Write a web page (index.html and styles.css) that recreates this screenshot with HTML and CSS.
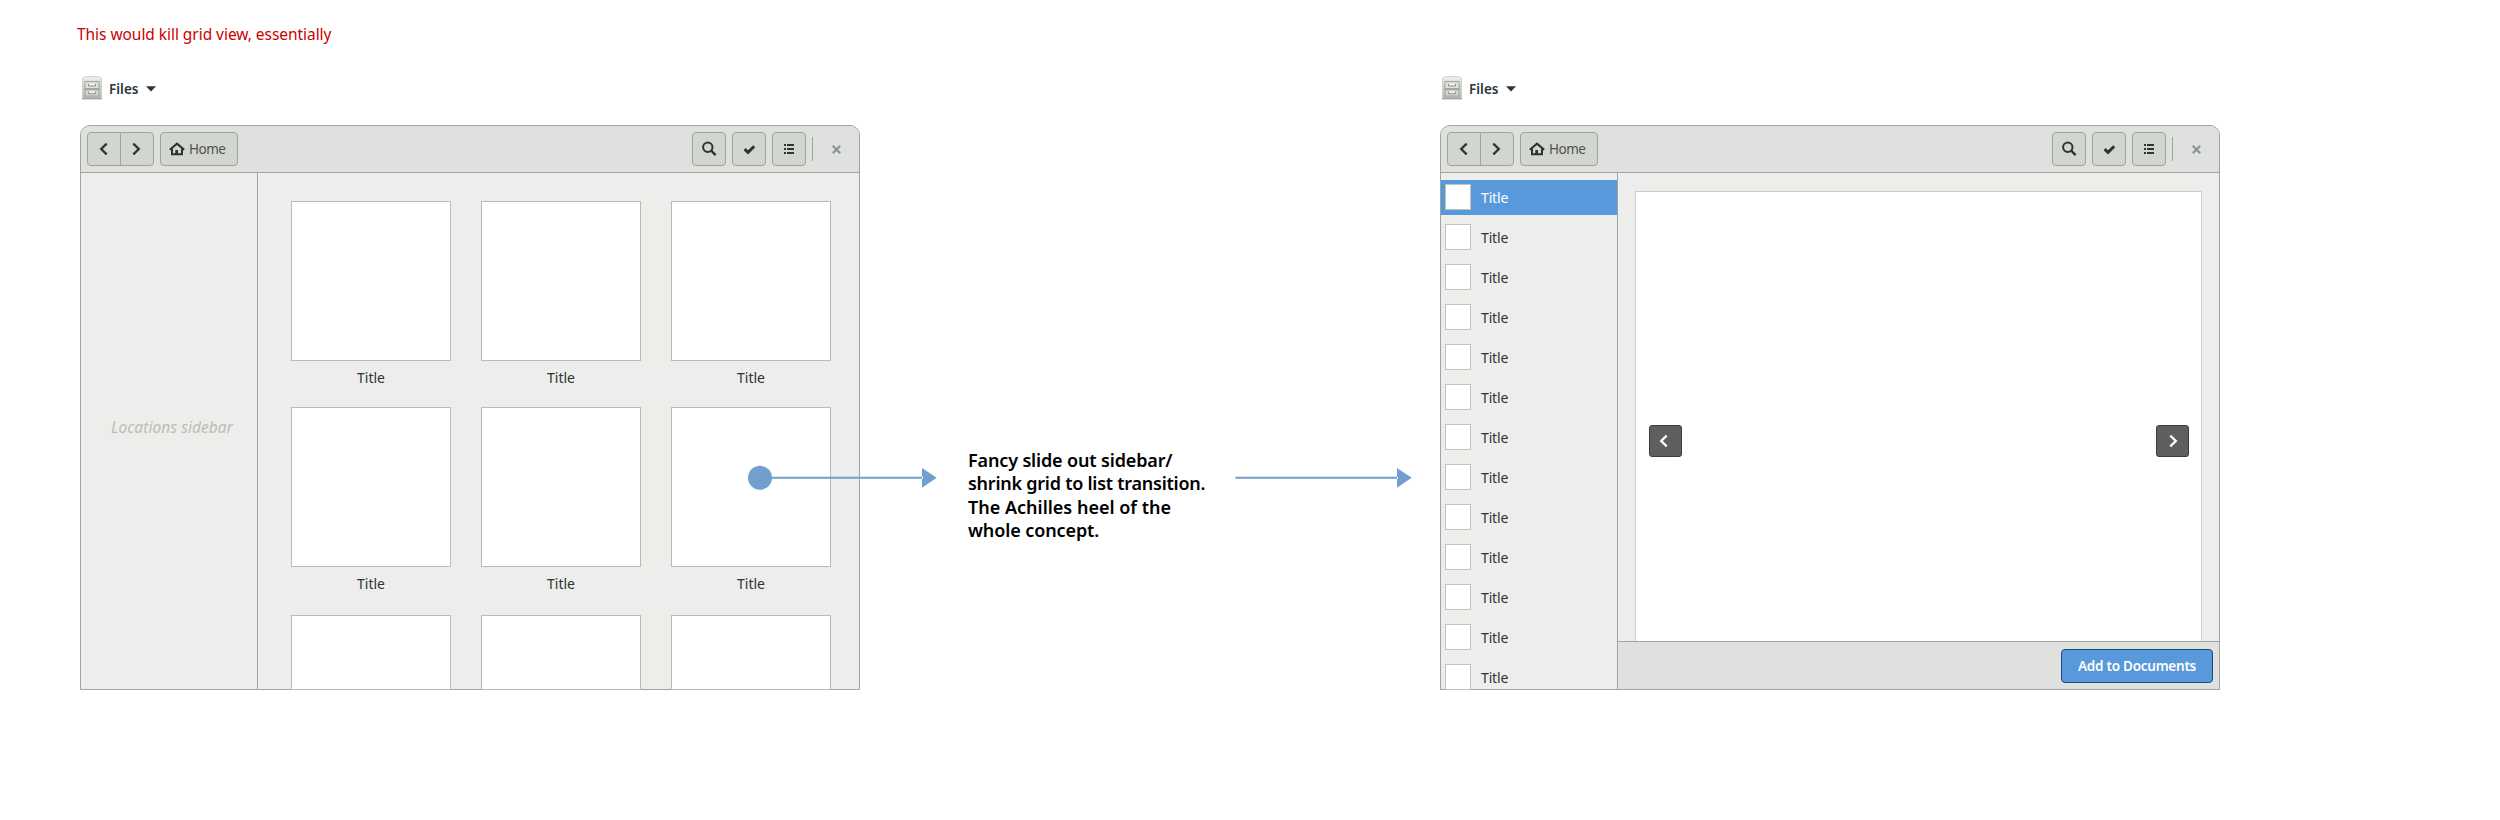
FILE: index.html
```
<!DOCTYPE html>
<html lang="en"><head><meta charset="utf-8"><title>Files</title><link rel="stylesheet" href="styles.css"></head>
<body>
<svg class="defs" width="0" height="0">
<defs>
<linearGradient id="metal" x1="0" y1="0" x2="0" y2="1"><stop offset="0" stop-color="#f4f4f2"/><stop offset=".3" stop-color="#d8dad6"/><stop offset="1" stop-color="#b8bab6"/></linearGradient>
<symbol id="cabinet" viewBox="0 0 20 24"><path d="M.5 22.500V4Q.5 .7 3.500 .7H16.500Q19.500 .7 19.500 4V22.500Z" fill="url(#metal)" stroke="#cdcfcb"/><path d="M0 22.800H20" stroke="#8c8e8a"/><rect x="3" y="5.500" width="14" height="7" fill="#dfe0dd" stroke="#a2a4a0"/><rect x="3" y="13.500" width="14" height="6.500" fill="#d2d4d0" stroke="#a2a4a0"/><path d="M6.500 7.800V10H13.500V7.800M6.500 15.500V17.700H13.500V15.500" fill="#f2f2f2" stroke="#8e908c"/></symbol>
<symbol id="prev" viewBox="0 0 16 16"><path d="M10.700 2.600 5.200 8 10.700 13.400" fill="none" stroke="currentColor" stroke-width="2.300"/></symbol>
<symbol id="next" viewBox="0 0 16 16"><path d="M5.300 2.600 10.800 8 5.300 13.400" fill="none" stroke="currentColor" stroke-width="2.300"/></symbol>
<symbol id="home" viewBox="0 0 16 14"><path d="M.8 7.800 8 1.700 15.200 7.800" fill="none" stroke="currentColor" stroke-width="2.100"/><path d="M3 6.500V12.200H13V6.500" fill="none" stroke="currentColor" stroke-width="2"/><path d="M6.300 13V8H9V13Z" fill="currentColor"/></symbol>
<symbol id="search" viewBox="0 0 16 16"><circle cx="6.800" cy="6.300" r="4.700" fill="none" stroke="currentColor" stroke-width="2"/><path d="M10.200 9.700 14.600 14.200" stroke="currentColor" stroke-width="2.400"/></symbol>
<symbol id="check" viewBox="0 0 16 16"><path d="M3.600 8.200 7 11.400 13.200 5.300" fill="none" stroke="currentColor" stroke-width="3"/></symbol>
<symbol id="list" viewBox="0 0 16 16"><path d="M3 4H5M6 4H13M3 8H5M6 8H13M3 12H5M6 12H13" stroke="currentColor" stroke-width="2"/></symbol>
<symbol id="close" viewBox="0 0 9 9"><path d="M.8 .8 8.200 8.200M8.200 .8 .8 8.200" stroke="currentColor" stroke-width="2.200"/></symbol>
</defs></svg>
<main class="board">
<p class="note">This would kill grid view, essentially</p>
<div class="flow">
<section class="screen">
<div class="appmenu"><svg class="cabinet"><use href="#cabinet"/></svg><b class="appname">Files</b><svg class="caret" viewBox="0 0 10 6"><path d="M0 .3H10L5 5.500Z"/></svg></div>
<div class="window">
<header class="bar"><div class="pair"><span><svg class="ic"><use href="#prev"/></svg></span><span><svg class="ic"><use href="#next"/></svg></span></div><div class="btn path"><svg class="house"><use href="#home"/></svg><span class="home">Home</span></div><div class="tools"><span class="btn"><svg class="ic"><use href="#search"/></svg></span><span class="btn"><svg class="ic"><use href="#check"/></svg></span><span class="btn"><svg class="ic"><use href="#list"/></svg></span></div><i class="sep"></i><svg class="close"><use href="#close"/></svg></header>
<div class="body">
<aside class="side places"><span class="hint">Locations sidebar</span></aside>
<div class="grid">
<figure><div class="thumb"></div><figcaption class="title">Title</figcaption></figure><figure><div class="thumb"></div><figcaption class="title">Title</figcaption></figure><figure><div class="thumb"></div><figcaption class="title">Title</figcaption></figure>
<figure><div class="thumb"></div><figcaption class="title">Title</figcaption></figure><figure><div class="thumb"></div><figcaption class="title">Title</figcaption></figure><figure><div class="thumb"></div><figcaption class="title">Title</figcaption></figure>
<figure><div class="thumb cut"></div></figure><figure><div class="thumb cut"></div></figure><figure><div class="thumb cut"></div></figure>
</div></div></div>
</section>
<div class="step">
<svg class="arrow first" viewBox="0 0 190 26"><circle cx="12" cy="12.800" r="12"/><path d="M12 11.800H175V13.800H12ZM174 3V22.700L188.700 12.800Z"/></svg>
<p class="callout"><span class="l1">Fancy slide out sidebar/</span><br><span class="l2">shrink grid to list transition.</span><br><span class="l3">The Achilles heel of the</span><br><span class="l4">whole concept.</span></p>
<svg class="arrow second" viewBox="0 0 177 26"><path d="M.3 11.800H163V13.800H.3ZM162 3V22.700L176.700 12.800Z"/></svg>
</div>
<section class="screen">
<div class="appmenu"><svg class="cabinet"><use href="#cabinet"/></svg><b class="appname">Files</b><svg class="caret" viewBox="0 0 10 6"><path d="M0 .3H10L5 5.500Z"/></svg></div>
<div class="window">
<header class="bar"><div class="pair"><span><svg class="ic"><use href="#prev"/></svg></span><span><svg class="ic"><use href="#next"/></svg></span></div><div class="btn path"><svg class="house"><use href="#home"/></svg><span class="home">Home</span></div><div class="tools"><span class="btn"><svg class="ic"><use href="#search"/></svg></span><span class="btn"><svg class="ic"><use href="#check"/></svg></span><span class="btn"><svg class="ic"><use href="#list"/></svg></span></div><i class="sep"></i><svg class="close"><use href="#close"/></svg></header>
<div class="body">
<ul class="side list">
<li class="sel"><i></i><span class="title">Title</span></li><li><i></i><span class="title">Title</span></li><li><i></i><span class="title">Title</span></li><li><i></i><span class="title">Title</span></li><li><i></i><span class="title">Title</span></li><li><i></i><span class="title">Title</span></li><li><i></i><span class="title">Title</span></li><li><i></i><span class="title">Title</span></li><li><i></i><span class="title">Title</span></li><li><i></i><span class="title">Title</span></li><li><i></i><span class="title">Title</span></li><li><i></i><span class="title">Title</span></li><li class="last"><i></i><span class="title">Title</span></li>
</ul>
<div class="viewer"><div class="stage"><div class="page"><span class="nav back"><svg class="ic"><use href="#prev"/></svg></span><span class="nav"><svg class="ic"><use href="#next"/></svg></span></div></div>
<footer class="actions"><span class="add"><span class="addtext">Add to Documents</span></span></footer></div>
</div></div>
</section>
</div>
</main>
</body></html>
```
FILE: styles.css
```
* { box-sizing: border-box; }
html { overflow: hidden; }
body { margin: 0; background: #fff; color: #2e3436; font: 14px/20px "Noto Sans", "Open Sans", sans-serif; }
p, ul, figure { margin: 0; padding: 0; }
svg { display: block; flex: none; }
.defs { position: absolute; }
.board { width: 2500px; height: 820px; padding-top: 24px; overflow: hidden; }
.note { height: 22px; padding-left: 77px; color: #c00; font-size: 15.500px; line-height: 20px; letter-spacing: -.050px; white-space: nowrap; }
.flow { display: flex; padding-left: 80px; margin-top: 29px; }
.screen { width: 780px; flex: none; }
.appmenu { display: flex; height: 50px; padding-left: 2px; }
.cabinet { width: 20px; height: 24px; margin-top: 1px; }
.appname { width: 30px; margin: 4px 0 0 7px; font-size: 13.500px; font-weight: 600; }
.caret { width: 10px; height: 6px; margin: 11px 0 0 7px; fill: #2e3436; }
.window { height: 565px; border: 1px solid #a0a4a0; border-radius: 10px 10px 0 0; background: #ededeb; }
.bar { display: flex; height: 47px; padding: 6px; border-bottom: 1px solid #a0a4a0; border-radius: 9px 9px 0 0; background: #dfe1de; }
.pair, .btn { display: flex; height: 34px; border: 1px solid #a0a4a0; border-radius: 4px; background: #d3d6cf; }
.pair { width: 67px; }
.pair span { display: flex; flex: 1; align-items: center; justify-content: center; }
.pair span + span { border-left: 1px solid #a0a4a0; padding-right: 1px; }
.ic { width: 16px; height: 16px; }
.btn { width: 34px; align-items: center; justify-content: center; }
.path { width: 78px; margin-left: 6px; justify-content: flex-start; padding-left: 8px; }
.house { width: 16px; height: 14px; }
.home { margin-left: 4px; color: #4d5253; font-size: 13.500px; letter-spacing: -.500px; }
.tools { display: flex; gap: 6px; margin-left: auto; }
.sep { width: 1px; height: 24px; margin: 5px 19px 0 6px; background: #a0a4a0; }
.close { width: 9px; height: 9px; margin: 13px 12px 0 0; color: #8e9291; }
.body { display: flex; height: 516px; }
.side { width: 177px; flex: none; border-right: 1px solid #a0a4a0; }
.places { padding: 244px 0 0 30px; }
.hint { color: #babdb6; font-size: 15.500px; font-style: italic; letter-spacing: .060px; white-space: nowrap; }
.grid { display: grid; grid-template-columns: repeat(3, 160px); grid-template-rows: 206px 208px 75px; column-gap: 30px; padding: 28px 0 0 33px; height: 516px; }
.thumb { height: 160px; border: 1px solid #babdb6; background: #fff; }
.cut { height: 75px; }
.grid .title { display: block; margin-top: 7px; text-align: center; }
.step { display: flex; width: 580px; flex: none; padding-top: 356px; }
.arrow { fill: #729fcf; height: 26px; margin-top: 34px; }
.first { width: 190px; margin-left: -112px; position: relative; }
.callout { width: 267px; margin-left: 30px; color: #000; font-size: 18px; font-weight: 600; line-height: 23.350px; white-space: nowrap; margin-top: 18px; }
.l1 { letter-spacing: -.150px; }
.l2 { letter-spacing: -.250px; }
.l4 { letter-spacing: -.100px; }
.second { width: 177px; }
.list { height: 516px; padding-top: 7px; list-style: none; }
.list li { display: flex; height: 35px; padding: 4px 0 0 4px; margin-bottom: 5px; }
.list i { width: 26px; height: 26px; background: #fff; border: 1px solid #c0c2bc; }
.list .title { margin: 4px 0 0 10px; letter-spacing: -.150px; }
.list .sel { background: #5899db; color: #fff; }
.list .last { height: 29px; margin: 0; }
.viewer { flex: 1; }
.stage { height: 468px; padding: 18px 17px 0 17px; }
.page { display: flex; height: 450px; padding: 233px 12px 0 13px; justify-content: space-between; border: 1px solid #cbcdc8; border-bottom: 0; background: #fff; }
.nav { display: flex; width: 33px; height: 32px; align-items: center; justify-content: center; border: 1px solid #3c3c3c; border-radius: 3px; background: #5f5f5f; color: #fff; }
.back { padding-right: 3px; }
.actions { display: flex; height: 48px; padding: 7px 6px 0; justify-content: flex-end; border-top: 1px solid #a0a4a0; background: #dfe1de; }
.add { width: 152px; height: 34px; padding: 6px 0 0 16px; border: 1px solid #204a7b; border-radius: 4px; background: #5899db; color: #fff; font-size: 13.500px; font-weight: 600; letter-spacing: -.250px; white-space: nowrap; }
```
